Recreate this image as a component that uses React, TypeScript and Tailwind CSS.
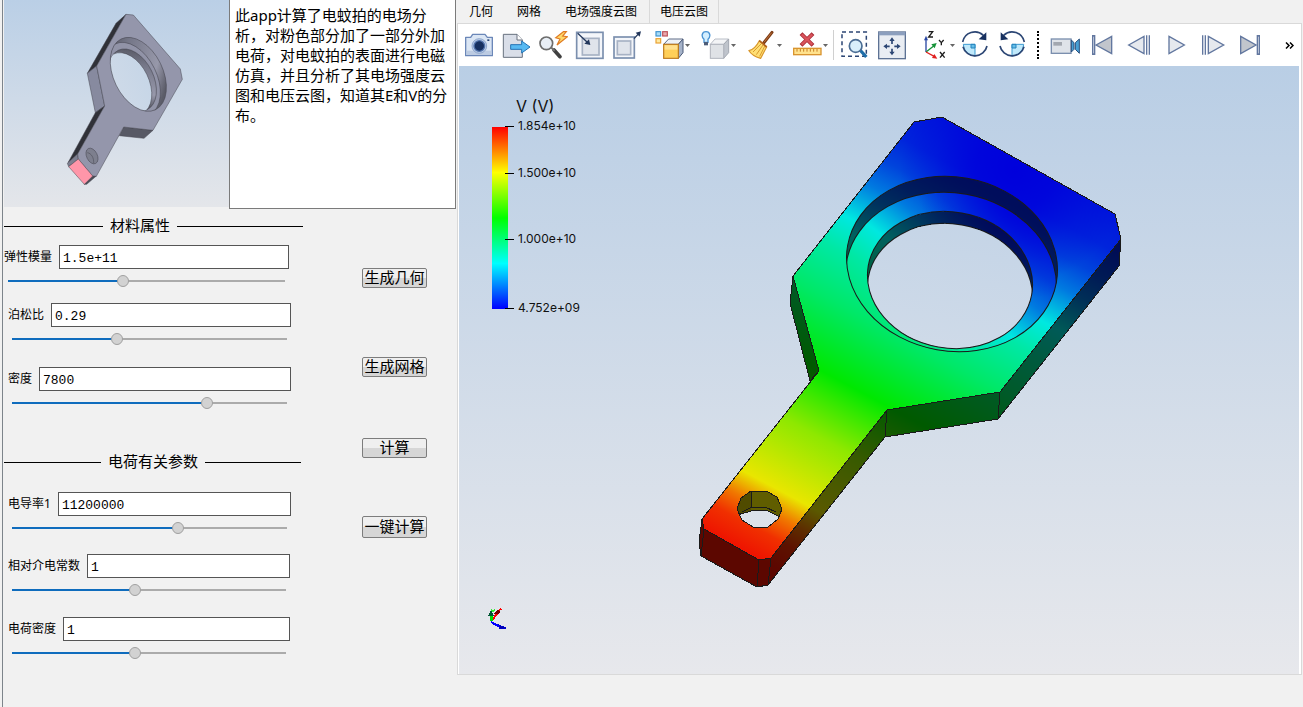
import React, { useId, useState } from "react";

const UI_FONT = "font-['Noto_Sans','Noto_Sans_CJK_SC',sans-serif]";
const MONO_FONT = "font-['Liberation_Mono','Noto_Sans_CJK_SC',monospace]";

/* ---------- Parameter panel ---------- */

type ParamProps = {
  label: string;
  initial: string;
  position: number;
  inset?: string;
  trail?: string;
};

function Param({ label, initial, position, inset = "pl-[5px]", trail = "pr-3" }: ParamProps) {
  const id = useId();
  const [value, setValue] = useState(initial);
  const [pos, setPos] = useState(position);
  const ratio = pos / 1000;
  const stop = `calc(6px + (100% - 12px) * ${ratio})`;
  return (
    <div className={`${inset} ${trail}`}>
      <div className="flex h-6 items-center gap-[7px]">
        <label htmlFor={id} className="shrink-0 text-xs leading-6 text-black">
          {label}
        </label>
        <input
          id={id}
          value={value}
          onChange={(e) => setValue(e.target.value)}
          className={`h-6 min-w-0 flex-1 border border-[#555] bg-white px-[3px] pt-[2px] text-[13px] text-black outline-none ${MONO_FONT}`}
        />
      </div>
      <div className="flex h-6 pr-1 pl-1">
        <input
          type="range"
          min={0}
          max={1000}
          value={pos}
          aria-label={label}
          onChange={(e) => setPos(Number(e.target.value))}
          style={{ backgroundImage: `linear-gradient(to right, #0f6cbd ${stop}, #ababab ${stop})` }}
          className="h-6 w-full appearance-none bg-[length:100%_2px] bg-center bg-no-repeat outline-none [&::-webkit-slider-thumb]:size-3 [&::-webkit-slider-thumb]:appearance-none [&::-webkit-slider-thumb]:rounded-full [&::-webkit-slider-thumb]:border [&::-webkit-slider-thumb]:border-[#a0a0a0] [&::-webkit-slider-thumb]:bg-[#d2d2d2]"
        />
      </div>
    </div>
  );
}

function Heading({ children, lead, trail = "" }: { children: string; lead: string; trail?: string }) {
  return (
    <h2 className={`flex h-6 items-center gap-[7px] pl-px text-[15px] text-black ${trail}`}>
      <span className={`h-px ${lead} shrink-0 bg-black`} />
      <span className="shrink-0 pb-[2px] leading-none">{children}</span>
      <span className="h-px flex-1 bg-black" />
    </h2>
  );
}

function ActionButton({ children, className = "h-5" }: { children: string; className?: string }) {
  return (
    <button
      type="button"
      className={`flex w-[65px] items-center justify-center rounded-[2px] border border-[#7d7d7d] bg-linear-to-b from-[#efefef] from-50% to-[#d6d6d6] to-50% pb-[2px] text-[15px] leading-none whitespace-nowrap text-black ${className}`}
    >
      {children}
    </button>
  );
}

function GeometryPreview() {
  return (
    <svg viewBox="12 0 675 621" className="block h-[207px] w-[225px] shrink-0" role="img" aria-label="几何模型">
      <defs>
        <linearGradient id="pvBg" gradientUnits="userSpaceOnUse" x1="0" y1="0" x2="0" y2="621">
          <stop offset="0" stopColor="#bacfe6" />
          <stop offset="1" stopColor="#e4e6ea" />
        </linearGradient>
        <linearGradient id="pvWall" x1="0" y1="0" x2="1" y2="0.4">
          <stop offset="0" stopColor="#4b4c55" />
          <stop offset="0.35" stopColor="#747687" />
          <stop offset="0.8" stopColor="#9798aa" />
          <stop offset="1" stopColor="#5b5c68" />
        </linearGradient>
        <clipPath id="pvOuter">
          <ellipse cx="415" cy="223" rx="118" ry="74" transform="rotate(64 415 223)" />
        </clipPath>
        <clipPath id="pvInner">
          <ellipse cx="398" cy="240" rx="99" ry="63" transform="rotate(64 398 240)" />
        </clipPath>
      </defs>
      <rect x="12" width="675" height="621" fill="url(#pvBg)" />
      <g stroke="#44454f" strokeWidth="1.5" strokeLinejoin="round">
        <path d="M378 43 290 198 262 220 348 70Z" fill="#303138" />
        <path d="M290 198 314 318 286 338 262 220Z" fill="#878a9f" />
        <path d="M314 318 286 338 204 488 233 462Z" fill="#303138" />
        <path d="M371 381 459 391 432 415 358 407Z" fill="#575965" />
        <path d="M233 462 235 477 206 500 202 490Z" fill="#7d7f90" />
        <path d="M278 528H289L260 553H252Z" fill="#4a4b55" />
        <path
          d="M378 43 400 45 541 207 547 238 459 391 371 381 289 529 278 528 235 477 233 462 314 318 290 198Z"
          fill="#9496ab"
        />
        <path d="M235 477 278 528 253 553 206 500Z" fill="#ff96a9" />
        <g clipPath="url(#pvOuter)">
          <rect x="310" y="90" width="210" height="260" fill="url(#pvWall)" />
          <ellipse cx="397" cy="238" rx="118" ry="74" transform="rotate(64 397 238)" fill="#9193a7" />
          <ellipse cx="398" cy="240" rx="99" ry="63" transform="rotate(64 398 240)" fill="url(#pvWall)" />
          <g clipPath="url(#pvInner)">
            <ellipse cx="384" cy="251" rx="99" ry="63" transform="rotate(64 384 251)" fill="url(#pvBg)" />
          </g>
        </g>
        <ellipse cx="415" cy="223" rx="118" ry="74" transform="rotate(64 415 223)" fill="none" />
        <ellipse cx="276" cy="468" rx="25" ry="16" transform="rotate(64 276 468)" fill="#7d7f8e" />
        <path d="M262 458c12 2 20 15 19 32" fill="none" />
      </g>
    </svg>
  );
}

/* ---------- Toolbar icons (drawn on a 90-unit grid) ---------- */

function Icon({ children }: { children: React.ReactNode }) {
  return (
    <svg viewBox="0 0 90 90" className="block size-[30px] shrink-0" aria-hidden="true">
      {children}
    </svg>
  );
}

const NAVY = "#2c4674";
const STEEL = "#7b8fae";

const CameraIcon = () => (
  <Icon>
    <path d="M5 22H20L26 13H63L70 22H85V77H5Z" fill="#dbe6f4" stroke="#6b87b8" strokeWidth="4" strokeLinejoin="round" />
    <rect x="8" y="62" width="74" height="13" fill="#bccbe2" />
    <circle cx="46" cy="48" r="22" fill="#b9cbe6" stroke="#8ea6cc" strokeWidth="3" />
    <circle cx="46" cy="48" r="16" fill="#17305f" stroke="#5172ab" strokeWidth="4" />
    <rect x="70" y="28" width="6" height="5" fill={NAVY} />
  </Icon>
);
const ExportIcon = () => (
  <Icon>
    <path d="M7 13H48L64 30V82H7Z" fill="#d9dee8" stroke="#68717f" strokeWidth="3" />
    <path d="M48 13V30H64" fill="#fff" stroke="#68717f" strokeWidth="3" />
    <path d="M29 44H62V33L87 51 62 69V58H29Z" fill="#57b9f2" stroke="#2573b5" strokeWidth="3" />
  </Icon>
);
const FlashZoomIcon = () => (
  <Icon>
    <path d="M48 60 66 80" stroke="#404040" strokeWidth="11" strokeLinecap="round" />
    <path d="M40 53 50 63" stroke="#707070" strokeWidth="6" />
    <circle cx="25" cy="40" r="19" fill="#e8eef5" stroke="#6d6d6d" strokeWidth="5" />
    <path d="M76 5 53 23 66 27 57 45 88 20 74 18 85 5Z" fill="#ffd869" stroke="#e07b23" strokeWidth="3.5" />
  </Icon>
);
const FrameInIcon = () => (
  <Icon>
    <rect x="5" y="7" width="79" height="78" fill="#f4f6fa" stroke={STEEL} strokeWidth="5" />
    <rect x="22" y="25" width="50" height="50" fill="#e0e4eb" stroke="#a7b2c4" strokeWidth="5" />
    <path d="M8 10 40 40" stroke="#23375c" strokeWidth="4" />
    <path d="M46 45 28 41 42 28Z" fill="#23375c" />
  </Icon>
);
const FrameOutIcon = () => (
  <Icon>
    <rect x="6" y="21" width="61" height="63" fill="#f4f6fa" stroke={STEEL} strokeWidth="5" />
    <rect x="16" y="33" width="40" height="41" fill="#e0e4eb" stroke="#a7b2c4" strokeWidth="5" />
    <path d="M66 26 80 11" stroke="#23375c" strokeWidth="4" />
    <path d="M87 4 71 8 83 20Z" fill="#23375c" />
  </Icon>
);
const ColorCubeIcon = () => (
  <Icon>
    <rect x="3" y="5" width="14" height="13" fill="#a9dcf8" stroke="#3e93cf" strokeWidth="3.5" />
    <rect x="23" y="5" width="14" height="13" fill="#e9a9ad" stroke="#bd525b" strokeWidth="3.5" />
    <rect x="3" y="26" width="14" height="13" fill="#ffe9a0" stroke="#e9a032" strokeWidth="3.5" />
    <path d="M26 43 41 27H84L70 43Z" fill="#eef1f6" stroke="#5e6d87" strokeWidth="3" />
    <path d="M70 43 84 27V68L70 85Z" fill="#a6b3c9" stroke="#4a5a78" strokeWidth="3" />
    <rect x="26" y="43" width="44" height="42" fill="#ffcf58" stroke="#bd7a1d" strokeWidth="3.5" />
    <rect x="29" y="46" width="38" height="13" fill="#ffe08f" />
  </Icon>
);
const LightCubeIcon = () => (
  <Icon>
    <path d="M28 43 42 27H83L68 43Z" fill="#f3f4f6" stroke="#b9bec7" strokeWidth="3" />
    <path d="M68 43 83 27V68L68 85Z" fill="#bfc4cc" stroke="#a3a8b1" strokeWidth="3" />
    <rect x="28" y="43" width="40" height="42" fill="#dfe2e6" stroke="#b0b4bc" strokeWidth="3" />
    <path d="M9 28C0 20 2 5 15 5s15 15 6 23v9H9Z" fill="#d4efff" stroke="#4a93d3" strokeWidth="4" />
    <rect x="9" y="36" width="12" height="10" fill="#4d5d78" />
  </Icon>
);
const BroomIcon = () => (
  <Icon>
    <path d="M75 7 50 39" stroke="#7c3c15" strokeWidth="9" strokeLinecap="round" />
    <path d="M74 8 51 37" stroke="#c0713a" strokeWidth="3" />
    <path d="M37 32 59 51 41 85C31 82 14 76 6 62 20 58 30 46 37 32Z" fill="#ffdf73" stroke="#d9962b" strokeWidth="3.5" />
    <path d="M43 41 18 66M48 45 28 74M53 49 38 79" stroke="#d99a30" strokeWidth="3" />
    <path d="M37 32 59 51" stroke="#b3621f" strokeWidth="5" />
  </Icon>
);
const RulerIcon = () => (
  <Icon>
    <path d="M24 11 60 46M60 11 24 46" stroke="#a82c35" strokeWidth="12" />
    <path d="M26 13 58 44M58 13 26 44" stroke="#d9535b" strokeWidth="7" />
    <rect x="2" y="55" width="82" height="19" fill="#ffe28d" stroke="#d9942f" strokeWidth="4" />
    <path d="M12 57v8M22 57v8M32 57v8M42 57v8M52 57v8M62 57v8M72 57v8" stroke="#c77f22" strokeWidth="3" />
  </Icon>
);
const ZoomAreaIcon = () => (
  <Icon>
    <rect x="6" y="6" width="73" height="73" fill="none" stroke={NAVY} strokeWidth="4.5" strokeDasharray="12 9" />
    <path d="M60 60 79 81" stroke="#1f6ea8" strokeWidth="10" />
    <circle cx="47" cy="48" r="19" fill="#d9effb" stroke="#4b6d94" strokeWidth="5" />
  </Icon>
);
const FitViewIcon = () => (
  <Icon>
    <rect x="5" y="6" width="80" height="80" fill="#e9edf3" stroke="#5d7294" strokeWidth="4" />
    <rect x="5" y="6" width="80" height="10" fill="#8c9fbe" />
    <path d="M45 32V42M45 56V66M28 49H38M52 49H62" stroke={NAVY} strokeWidth="5" />
    <path d="M45 22 37 33H53ZM45 76 37 65H53ZM19 49 30 41V57ZM71 49 60 41V57Z" fill={NAVY} />
  </Icon>
);
const AxesIcon = () => (
  <svg viewBox="0 0 78 90" className="block h-[30px] w-[26px] shrink-0" aria-hidden="true">
    <path d="M6 66V28" stroke="#2947a3" strokeWidth="4" />
    <path d="M6 17 0 31H12Z" fill="#2947a3" />
    <path d="M6 66 32 46" stroke="#159238" strokeWidth="4" />
    <path d="M38 39 22 43 32 55Z" fill="#159238" />
    <path d="M6 66 32 80" stroke="#e01f1f" strokeWidth="4" />
    <path d="M40 86 24 84 31 72Z" fill="#e01f1f" />
    <path d="M14 5H26L14 21H27M45 30 52 38V46M59 30 52 38M48 66 62 83M62 66 48 83" fill="none" stroke="#1c1c1c" strokeWidth="4" />
  </svg>
);
function RotateIcon({ mirrored = false }: { mirrored?: boolean }) {
  return (
    <Icon>
      <g transform={mirrored ? "translate(90 0) scale(-1 1)" : undefined}>
        <path d="M45 43H10A35 35 0 0 0 45 78Z" fill="#c0e9fb" stroke="#3b9ad0" strokeWidth="3" />
        <path d="M45 43H33V54H45Z" fill="#66bfe8" stroke="#2483bd" strokeWidth="3" />
        <path d="M8 36A37 37 0 0 1 70 16M81 48A37 37 0 0 1 9 50" fill="none" stroke={NAVY} strokeWidth="5" />
        <path d="M79 7V31L56 28Z" fill="#17305f" />
      </g>
    </Icon>
  );
}
const VideoIcon = () => (
  <Icon>
    <rect x="4" y="27" width="59" height="43" fill="#dfe3e9" stroke={STEEL} strokeWidth="4" />
    <rect x="10" y="36" width="26" height="11" fill="#a3a8b0" />
    <path d="M64 30 72 38V58L64 66ZM88 27 76 38V58L88 70Z" fill="#48a0d5" stroke="#294f7d" strokeWidth="3" />
  </Icon>
);
const play = { stroke: "#62779f", strokeWidth: 4, strokeLinejoin: "miter" as const };
const FirstIcon = () => (
  <Icon>
    <path d="M27 45 74 19V71Z" fill="#c1c5cc" {...play} />
    <rect x="17" y="17" width="6" height="56" fill="#dfe5ee" {...play} />
  </Icon>
);
const PrevIcon = () => (
  <Icon>
    <path d="M14 45 60 19V71Z" fill="#e6e9ee" {...play} />
    <path d="M68 16V74M76 16V74" {...play} />
  </Icon>
);
const PlayIcon = () => (
  <Icon>
    <path d="M24 19 70 45 24 71Z" fill="#e6e9ee" {...play} />
  </Icon>
);
const NextIcon = () => (
  <Icon>
    <path d="M31 19 77 45 31 71Z" fill="#e6e9ee" {...play} />
    <path d="M14 16V74M22 16V74" {...play} />
  </Icon>
);
const LastIcon = () => (
  <Icon>
    <path d="M17 19 63 45 17 71Z" fill="#c1c5cc" {...play} />
    <rect x="67" y="17" width="6" height="56" fill="#dfe5ee" {...play} />
  </Icon>
);

function ToolButton({ label, children }: { label: string; children: React.ReactNode }) {
  return (
    <button type="button" aria-label={label} className="flex h-9 w-[37px] shrink-0 items-center justify-center">
      {children}
    </button>
  );
}

function MenuButton({ label, children }: { label: string; children: React.ReactNode }) {
  return (
    <button type="button" aria-label={label} className="flex h-9 shrink-0 items-center">
      {children}
      <svg viewBox="0 0 5 3" className="h-[3px] w-[5px]" aria-hidden="true">
        <path d="M0 0H5L2.500 3Z" fill="#666" />
      </svg>
    </button>
  );
}

/* ---------- Result viewport ---------- */

const FACE =
  "M914 122 942 117 1115 214 1121 239 1000 392 887 410 771 558 759 560 704 529 702 519 819 371 793 276Z";
const SIDES = [
  "M793 276 819 371 810 381 790 303Z",
  "M1121 239 1119 266 998 419 1000 392Z",
  "M1000 392 998 419 885 437 887 410Z",
  "M887 410 885 437 768 585 771 558Z",
  "M771 558 768 585 757 587 759 560Z",
  "M759 560 757 587 701 556 704 529Z",
  "M704 529 701 556 699 542 702 519Z",
];
const FIELD: [number, string][] = [
  [0, "#ee1200"],
  [0.055, "#f03000"],
  [0.1, "#f07800"],
  [0.148, "#e9e600"],
  [0.286, "#8ee800"],
  [0.41, "#00e800"],
  [0.55, "#00e868"],
  [0.65, "#00e8a4"],
  [0.72, "#00e8e0"],
  [0.8, "#007ae0"],
  [0.86, "#0044dc"],
  [0.92, "#0024dc"],
  [1, "#0014dc"],
];
const LEGEND: [number, string][] = [
  [126, "1.854e+10"],
  [173, "1.500e+10"],
  [239, "1.000e+10"],
  [308, "4.752e+09"],
];

function FieldGradient({ id, drop = 0 }: { id: string; drop?: number }) {
  return (
    <linearGradient id={id} gradientUnits="userSpaceOnUse" x1="760" y1={560 + drop} x2="985" y2={139 + drop}>
      {FIELD.map(([offset, color]) => (
        <stop key={offset} offset={offset} stopColor={color} />
      ))}
    </linearGradient>
  );
}

function ResultView() {
  return (
    <svg viewBox="459 66 840 608" className="block h-auto w-full" role="img" aria-label="电压云图">
      <defs>
        <linearGradient id="bg" gradientUnits="userSpaceOnUse" x1="0" y1="66" x2="0" y2="674">
          <stop offset="0" stopColor="#b9cee5" />
          <stop offset="1" stopColor="#e7e8ec" />
        </linearGradient>
        <linearGradient id="bar" x1="0" y1="0" x2="0" y2="1">
          <stop offset="0" stopColor="#f00" />
          <stop offset="0.25" stopColor="#ff0" />
          <stop offset="0.5" stopColor="#0f0" />
          <stop offset="0.75" stopColor="#0ff" />
          <stop offset="1" stopColor="#00f" />
        </linearGradient>
        <FieldGradient id="field" />
        <FieldGradient id="floor" drop={16} />
        <radialGradient id="low" gradientUnits="userSpaceOnUse" cx="1015" cy="170" r="115">
          <stop offset="0" stopColor="#0000dc" />
          <stop offset="0.35" stopColor="#0000dc" stopOpacity="0.8" />
          <stop offset="0.7" stopColor="#0000dc" stopOpacity="0.3" />
          <stop offset="1" stopColor="#0000dc" stopOpacity="0" />
        </radialGradient>
        <clipPath id="face">
          <path d={FACE} />
        </clipPath>
        <clipPath id="recess">
          <ellipse cx="952" cy="264" rx="106" ry="87" transform="rotate(10 952 264)" />
        </clipPath>
        <clipPath id="bore">
          <ellipse cx="950" cy="280" rx="83" ry="68" transform="rotate(10 950 280)" />
        </clipPath>
        <clipPath id="pin">
          <path d="M741 498 751 491H766L777 497 782 509 778 519 768 527H753L742 520 737 509Z" />
        </clipPath>
      </defs>

      <rect x="459" y="66" width="840" height="608" fill="url(#bg)" />

      <g shapeRendering="crispEdges" strokeLinejoin="round">
        {SIDES.map((d) => (
          <g key={d}>
            <path d={d} fill="url(#field)" />
            <path d={d} fill="#000" fillOpacity="0.61" stroke="#1a1a1a" />
          </g>
        ))}
        <path d={FACE} fill="url(#field)" />
        <rect x="780" y="100" width="350" height="350" fill="url(#low)" clipPath="url(#face)" />
        <path d={FACE} fill="none" stroke="#1a1a1a" />

        <g clipPath="url(#recess)">
          <rect x="840" y="170" width="225" height="190" fill="url(#floor)" />
          <rect x="840" y="170" width="225" height="190" fill="#000" fillOpacity="0.58" />
          <ellipse cx="951" cy="280" rx="106" ry="87" transform="rotate(10 951 280)" fill="url(#floor)" />
          <ellipse cx="951" cy="280" rx="106" ry="87" transform="rotate(10 951 280)" fill="url(#low)" stroke="#1a1a1a" />
          <ellipse cx="950" cy="280" rx="83" ry="68" transform="rotate(10 950 280)" fill="#000" fillOpacity="0.58" />
          <g clipPath="url(#bore)">
            <ellipse cx="950" cy="292" rx="83" ry="68" transform="rotate(10 950 292)" fill="url(#bg)" stroke="#1a1a1a" />
          </g>
          <ellipse cx="950" cy="280" rx="83" ry="68" transform="rotate(10 950 280)" fill="none" stroke="#1a1a1a" />
        </g>
        <ellipse cx="952" cy="264" rx="106" ry="87" transform="rotate(10 952 264)" fill="none" stroke="#1a1a1a" />

        <g clipPath="url(#pin)">
          <rect x="735" y="488" width="50" height="42" fill="#605d00" />
          <path d="M737 491H751V512L737 518Z" fill="#504b00" />
          <path d="M737 515 755 510H766L782 518V530H737Z" fill="url(#bg)" stroke="#1a1a1a" />
          <path d="M751 491V508M742 512 752 507H765L776 512" fill="none" stroke="#1a1a1a" />
        </g>
        <path d="M741 498 751 491H766L777 497 782 509 778 519 768 527H753L742 520 737 509Z" fill="none" stroke="#1a1a1a" />
      </g>

      <rect x="492" y="127" width="16" height="182" fill="url(#bar)" />
      <g className="font-['Inter','Noto_Sans',sans-serif]" fill="#111">
        <text x="516" y="112" fontSize="16">V (V)</text>
        {LEGEND.map(([y, text]) => (
          <g key={text}>
            <path d={`M505 ${y}H514V${y + 1}H505Z`} fill="#000" />
            <text x="518" y={y + 4} fontSize="12">{text}</text>
          </g>
        ))}
      </g>

      <g shapeRendering="crispEdges" fill="none" strokeWidth="2">
        <path d="M491 621 498 613" stroke="#f00" />
        <path d="M495 613 500 609 499 613Z" fill="#700" stroke="#700" strokeWidth="1" />
        <path d="M499 611 501 608M502 610 500 608" stroke="#f00" strokeWidth="1" />
        <path d="M491 621V614" stroke="#0d0" strokeWidth="3" />
        <path d="M489 615 491 611 493 615Z" fill="#053" stroke="#053" strokeWidth="1" />
        <path d="M491 609 493 612 495 609" stroke="#3e3" strokeWidth="1" />
        <path d="M491 622 500 627" stroke="#00f" />
        <path d="M499 625 506 628 500 629Z" fill="#00a" stroke="#00c" strokeWidth="1" />
      </g>
    </svg>
  );
}

export default function App() {
  return (
    <div className={`flex min-h-screen bg-[#f1f1f1] pl-[2px] text-black ${UI_FONT}`}>
      <aside className="w-[455px] shrink-0 border-l border-[#7d848b]">
        <div className="flex pl-px">
          <GeometryPreview />
          <textarea
            readOnly
            aria-label="说明"
            spellCheck={false}
            defaultValue="此app计算了电蚊拍的电场分析，对粉色部分加了一部分外加电荷，对电蚊拍的表面进行电磁仿真，并且分析了其电场强度云图和电压云图，知道其E和V的分布。"
            className="block h-[209px] w-[227px] resize-none overflow-hidden border border-t-0 border-[#7b7b7b] bg-white px-[5px] pt-[5px] text-[15px] leading-5 outline-none"
          />
        </div>

        <div className="flex">
          <form className="w-[300px] shrink-0 pt-[5px]">
            <Heading lead="w-[99px]">材料属性</Heading>
            <div className="mt-[7px]">
              <Param label="弹性模量" initial="1.5e+11" position={413} inset="pl-px" trail="pr-[14px]" />
            </div>
            <div className="mt-[10px]">
              <Param label="泊松比" initial="0.29" position={375} />
            </div>
            <div className="mt-4">
              <Param label="密度" initial="7800" position={720} />
            </div>
            <div className="mt-[35px]">
              <Heading lead="w-[97px]" trail="pr-[2px]">电荷有关参数</Heading>
            </div>
            <div className="mt-[18px]">
              <Param label="电导率1" initial="11200000" position={610} />
            </div>
            <div className="mt-[14px]">
              <Param label="相对介电常数" initial="1" position={445} trail="pr-[13px]" />
            </div>
            <div className="mt-[15px]">
              <Param label="电荷密度" initial="1" position={445} trail="pr-[13px]" />
            </div>
          </form>

          <div className="ml-[59px] flex flex-col pt-[59px]">
            <ActionButton>生成几何</ActionButton>
            <ActionButton className="mt-[69px] h-5">生成网格</ActionButton>
            <ActionButton className="mt-[61px] h-5">计算</ActionButton>
            <ActionButton className="mt-[58px] h-[22px]">一键计算</ActionButton>
          </div>
        </div>
      </aside>

      <main className="min-w-0 flex-1 pr-px">
        <nav className="flex h-[23px] text-xs leading-6">
          <button type="button" className="px-3">几何</button>
          <button type="button" className="px-3">网格</button>
          <button type="button" className="px-3">电场强度云图</button>
          <button type="button" className="border-x border-[#d9d9d9] px-[10px]">电压云图</button>
        </nav>
        <div className="border border-[#d9d9d9] bg-white pr-[2px] pl-px">
          <div className="flex h-[42px] items-center pl-px">
            <ToolButton label="截图"><CameraIcon /></ToolButton>
            <ToolButton label="导出"><ExportIcon /></ToolButton>
            <ToolButton label="快速缩放"><FlashZoomIcon /></ToolButton>
            <ToolButton label="缩小到框"><FrameInIcon /></ToolButton>
            <ToolButton label="放大到框"><FrameOutIcon /></ToolButton>
            <div className="ml-[10px] flex gap-[11px]">
              <MenuButton label="颜色"><ColorCubeIcon /></MenuButton>
              <MenuButton label="光照"><LightCubeIcon /></MenuButton>
              <MenuButton label="清除"><BroomIcon /></MenuButton>
              <MenuButton label="删除测量"><RulerIcon /></MenuButton>
            </div>
            <span className="mr-[2px] ml-[5px] h-[30px] w-px shrink-0 bg-[#d0d0d0]" />
            <ToolButton label="框选缩放"><ZoomAreaIcon /></ToolButton>
            <ToolButton label="适应窗口"><FitViewIcon /></ToolButton>
            <div className="mr-px ml-[14px]">
              <MenuButton label="坐标轴"><AxesIcon /></MenuButton>
            </div>
            <ToolButton label="顺时针旋转"><RotateIcon /></ToolButton>
            <ToolButton label="逆时针旋转"><RotateIcon mirrored /></ToolButton>
            <span className="mr-[7px] ml-[7px] h-7 shrink-0 border-l-2 border-dotted border-black" />
            <ToolButton label="录像"><VideoIcon /></ToolButton>
            <ToolButton label="第一帧"><FirstIcon /></ToolButton>
            <ToolButton label="上一帧"><PrevIcon /></ToolButton>
            <ToolButton label="播放"><PlayIcon /></ToolButton>
            <ToolButton label="下一帧"><NextIcon /></ToolButton>
            <ToolButton label="最后一帧"><LastIcon /></ToolButton>
            <button type="button" aria-label="更多" className="mr-[5px] ml-auto flex h-9 items-center">
              <svg viewBox="0 0 9 7" className="h-[7px] w-[9px]" fill="none" stroke="#000" strokeWidth="1.500" aria-hidden="true">
                <path d="M1 .5 4 3.500 1 6.500M5 .5 8 3.500 5 6.500" />
              </svg>
            </button>
          </div>
          <ResultView />
        </div>
      </main>
    </div>
  );
}
